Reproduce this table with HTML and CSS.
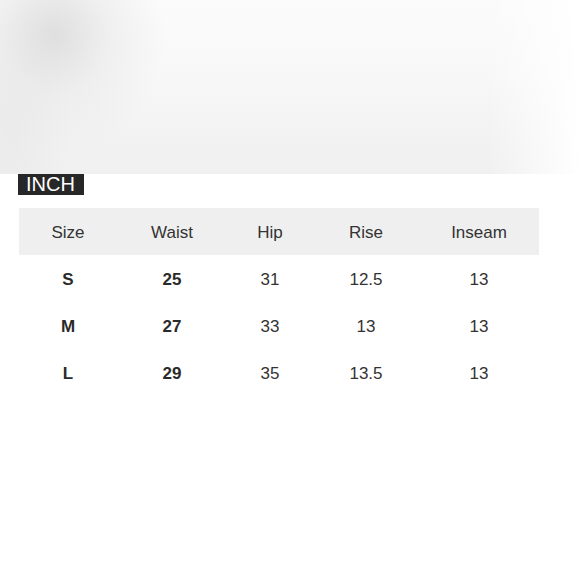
FILE: index.html
```html
<!DOCTYPE html>
<html>
<head>
<meta charset="utf-8">
<link rel="stylesheet" href="styles.css">
</head>
<body>
<div class="hero"></div>
<div class="content">
  <div class="badge">INCH</div>
  <table class="chart">
    <colgroup>
      <col class="c1"><col class="c2"><col class="c3"><col class="c4"><col class="c5">
    </colgroup>
    <thead>
      <tr><th>Size</th><th>Waist</th><th>Hip</th><th>Rise</th><th>Inseam</th></tr>
    </thead>
    <tbody>
      <tr><td class="b">S</td><td class="b">25</td><td>31</td><td>12.5</td><td>13</td></tr>
      <tr><td class="b">M</td><td class="b">27</td><td>33</td><td>13</td><td>13</td></tr>
      <tr><td class="b">L</td><td class="b">29</td><td>35</td><td>13.5</td><td>13</td></tr>
    </tbody>
  </table>
</div>
</body>
</html>
```
FILE: styles.css
```css
html, body {
  margin: 0;
  padding: 0;
  background: #fff;
}
body {
  font-family: "Liberation Sans", Arial, sans-serif;
  color: #2a2a2a;
  width: 580px;
  height: 580px;
  overflow: hidden;
}
.hero {
  height: 174px;
  background:
    radial-gradient(ellipse 110px 120px at 55px 35px, rgba(218,218,218,0.85), rgba(228,228,228,0.45) 50%, rgba(240,240,240,0) 100%),
    radial-gradient(ellipse 60px 140px at 10px 130px, rgba(232,232,232,0.7), rgba(240,240,240,0) 100%),
    linear-gradient(90deg, rgba(255,255,255,0) 0%, rgba(255,255,255,0) 84%, rgba(255,255,255,1) 100%),
    linear-gradient(180deg, #fbfbfb 0%, #f8f8f8 40%, #f2f2f2 80%, #f0f0f0 100%);
}
.content {
  padding: 0 0 0 18px;
}
.badge {
  display: inline-block;
  vertical-align: top;
  background: #272727;
  color: #fff;
  font-size: 20px;
  line-height: 21px;
  height: 21px;
  padding: 0 9px 0 8px;
}
.chart {
  margin-top: 13px;
  margin-left: 1px;
  width: 520px;
  border-collapse: collapse;
  table-layout: fixed;
  font-size: 17px;
}
.c1 { width: 98px; }
.c2 { width: 110px; }
.c3 { width: 86px; }
.c4 { width: 106px; }
.c5 { width: 120px; }
.chart th {
  background: #efefef;
  font-weight: normal;
  height: 45px;
  padding: 2px 0 0;
  text-align: center;
  color: #333;
}
.chart td {
  height: 45px;
  padding: 2px 0 0;
  text-align: center;
  color: #333;
}
.chart td.b {
  font-weight: bold;
  color: #2a2a2a;
}
```
